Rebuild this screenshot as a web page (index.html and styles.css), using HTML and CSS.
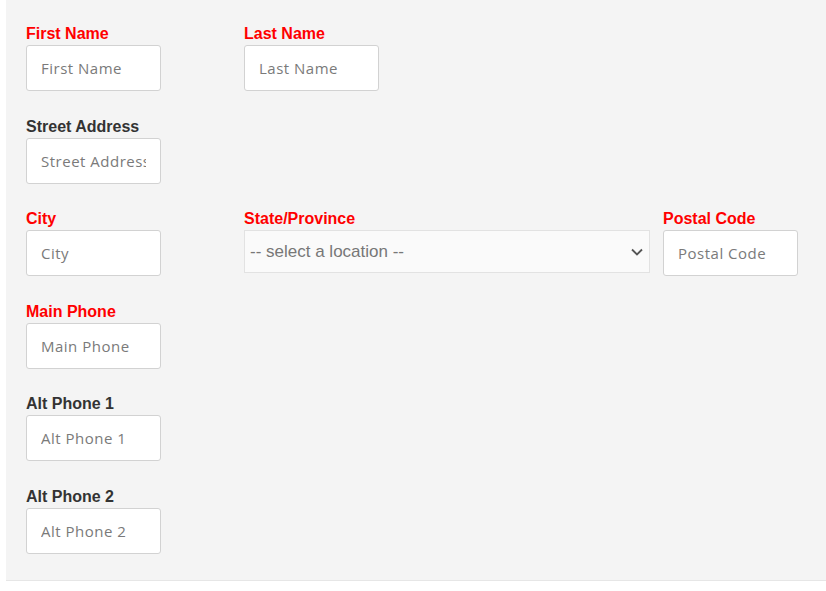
FILE: index.html
```html
<!DOCTYPE html>
<html lang="en">
<head>
  <meta charset="UTF-8" />
  <meta name="viewport" content="width=device-width, initial-scale=1.0"/>
  <title>Contact Details</title>
  <link rel="stylesheet" href="styles.css">
</head>
<body>

<form class="panel">
  <div class="row">
    <div class="field col-1">
      <label class="required" for="firstName">First Name</label>
      <input type="text" id="firstName" placeholder="First Name">
    </div>
    <div class="field col-2">
      <label class="required" for="lastName">Last Name</label>
      <input type="text" id="lastName" placeholder="Last Name">
    </div>
  </div>

  <div class="row">
    <div class="field col-1">
      <label for="street">Street Address</label>
      <input type="text" id="street" placeholder="Street Address">
    </div>
  </div>

  <div class="row">
    <div class="field col-1">
      <label class="required" for="city">City</label>
      <input type="text" id="city" placeholder="City">
    </div>
    <div class="field col-2">
      <label class="required" for="state">State/Province</label>
      <div class="select-wrap">
        <select id="state">
          <option>-- select a location --</option>
        </select>
        <svg class="chevron" width="12" height="8" viewBox="0 0 12 8">
          <path d="M1 1.5 L6 6.5 L11 1.5" fill="none" stroke="#555" stroke-width="1.8"/>
        </svg>
      </div>
    </div>
    <div class="field">
      <label class="required" for="postal">Postal Code</label>
      <input type="text" id="postal" placeholder="Postal Code">
    </div>
  </div>

  <div class="row">
    <div class="field col-1">
      <label class="required" for="mainPhone">Main Phone</label>
      <input type="text" id="mainPhone" placeholder="Main Phone">
    </div>
  </div>

  <div class="row">
    <div class="field col-1">
      <label for="alt1">Alt Phone 1</label>
      <input type="text" id="alt1" placeholder="Alt Phone 1">
    </div>
  </div>

  <div class="row">
    <div class="field col-1">
      <label for="alt2">Alt Phone 2</label>
      <input type="text" id="alt2" placeholder="Alt Phone 2">
    </div>
  </div>
</form>

</body>
</html>
```

FILE: styles.css
```css
body {
  margin: 0;
  background: white;
  font-family: 'Liberation Sans', Arial, sans-serif;
  overflow: hidden;
}
.panel {
  margin-left: 6px;
  background: #f4f4f4;
  border-bottom: 1px solid #e6e6e6;
  padding: 24px 0 26px 20px;
  display: flex;
  flex-direction: column;
  gap: 25.6px;
}
.row {
  display: flex;
  align-items: flex-start;
}
.field {
  display: flex;
  flex-direction: column;
}
.col-1 {
  width: 218px;
}
.col-2 {
  width: 419px;
}
label {
  display: block;
  font-size: 16px;
  font-weight: bold;
  line-height: 20px;
  margin-bottom: 1px;
  color: #333;
}
label.required {
  color: #ff0000;
}
input[type="text"] {
  width: 135px;
  height: 46px;
  box-sizing: border-box;
  padding: 0 14px;
  border: 1px solid #d2d2d2;
  border-radius: 3px;
  background: white;
  font-family: 'Open Sans', sans-serif;
  font-size: 15px;
  letter-spacing: 0.5px;
  color: #333;
  outline: none;
}
input::placeholder {
  color: #7a7a7a;
}
.select-wrap {
  position: relative;
  width: 406px;
}
select {
  appearance: none;
  -webkit-appearance: none;
  width: 100%;
  height: 43px;
  box-sizing: border-box;
  padding: 0 30px 0 5px;
  border: 1px solid #e2e2e2;
  border-radius: 0;
  background: #fafafa;
  font-family: 'Liberation Sans', Arial, sans-serif;
  font-size: 17px;
  color: #777;
  outline: none;
}
.chevron {
  position: absolute;
  right: 7px;
  top: 18px;
  pointer-events: none;
}
```
